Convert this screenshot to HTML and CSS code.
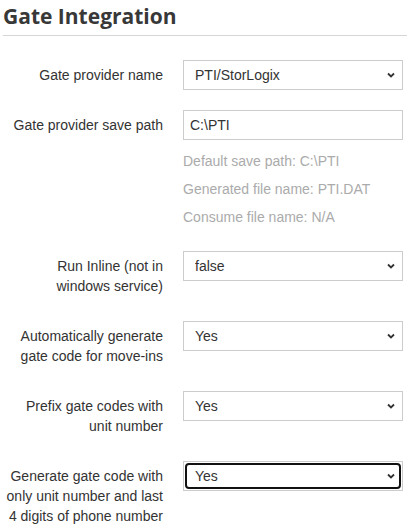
FILE: index.html
```html
<!DOCTYPE html>
<html lang="en">
<head>
  <meta charset="UTF-8">
  <title>Gate Integration</title>
  <link rel="stylesheet" href="styles.css">
</head>
<body>
  <div class="panel">
    <h2 class="panel-title">Gate Integration</h2>

    <div class="form-row">
      <label class="form-label" for="provider">Gate provider name</label>
      <div class="form-field">
        <select id="provider" class="form-control">
          <option>PTI/StorLogix</option>
        </select>
      </div>
    </div>

    <div class="form-row">
      <label class="form-label" for="savepath">Gate provider save path</label>
      <div class="form-field">
        <input type="text" id="savepath" class="form-control" value="C:\PTI">
        <div class="help-list">
          <p class="help">Default save path: C:\PTI</p>
          <p class="help">Generated file name: PTI.DAT</p>
          <p class="help">Consume file name: N/A</p>
        </div>
      </div>
    </div>

    <div class="form-row">
      <label class="form-label" for="inline">Run Inline (not in windows service)</label>
      <div class="form-field">
        <select id="inline" class="form-control">
          <option>false</option>
        </select>
      </div>
    </div>

    <div class="form-row">
      <label class="form-label" for="autogen">Automatically generate gate code for move-ins</label>
      <div class="form-field">
        <select id="autogen" class="form-control">
          <option>Yes</option>
        </select>
      </div>
    </div>

    <div class="form-row">
      <label class="form-label" for="prefix">Prefix gate codes with unit number</label>
      <div class="form-field">
        <select id="prefix" class="form-control">
          <option>Yes</option>
        </select>
      </div>
    </div>

    <div class="form-row">
      <label class="form-label" for="phone">Generate gate code with only unit number and last 4 digits of phone number</label>
      <div class="form-field">
        <div class="focus-wrap">
          <select id="phone" class="form-control focused">
            <option>Yes</option>
          </select>
        </div>
      </div>
    </div>
  </div>
</body>
</html>
```

FILE: styles.css
```css
body {
  margin: 0;
  background: #ffffff;
  font-family: 'Liberation Sans', Arial, sans-serif;
  font-size: 14px;
  color: #333;
}

.panel {
  padding: 0 4px 0 3px;
}

.panel-title {
  font-family: 'Open Sans', sans-serif;
  font-weight: 700;
  font-size: 21px;
  color: #383838;
  margin: 0 -4px 0 0;
  padding: 3px 0 6px;
  line-height: 26px;
  border-bottom: 1px solid #d6d6d6;
  margin-bottom: 24px;
}

.form-row {
  display: flex;
  align-items: flex-start;
  margin-bottom: 20px;
}

.form-label {
  width: 160px;
  flex: none;
  margin-right: 20px;
  padding: 5px 0;
  line-height: 20px;
  text-align: right;
}

.form-field {
  flex: 1;
}

.form-control {
  display: block;
  width: 100%;
  height: 30px;
  box-sizing: border-box;
  border: 1px solid #ccc;
  border-radius: 0;
  background: #fff;
  font-family: 'Liberation Sans', Arial, sans-serif;
  font-size: 14px;
  color: #333;
  margin: 0;
}

input.form-control {
  padding: 0 6px;
}

select.form-control {
  -webkit-appearance: none;
  appearance: none;
  padding: 0 24px 0 11px;
  background: #fff url("data:image/svg+xml,%3Csvg xmlns='http://www.w3.org/2000/svg' width='8' height='6' viewBox='0 0 8 6'%3E%3Cpath d='M1 1.5 L4 4.5 L7 1.5' fill='none' stroke='%23333' stroke-width='1.8'/%3E%3C/svg%3E") no-repeat right 7px center;
}

.focus-wrap {
  border: 1px solid #ccc;
  padding: 1px;
}

select.form-control.focused {
  height: 26px;
  border: 2px solid #111;
  border-radius: 4px;
  padding-left: 8px;
  background-position: right 4px center;
}

.help-list {
  margin-top: 7px;
}

.help {
  margin: 0;
  padding: 4px 0;
  line-height: 20px;
  color: #ababab;
}
```
